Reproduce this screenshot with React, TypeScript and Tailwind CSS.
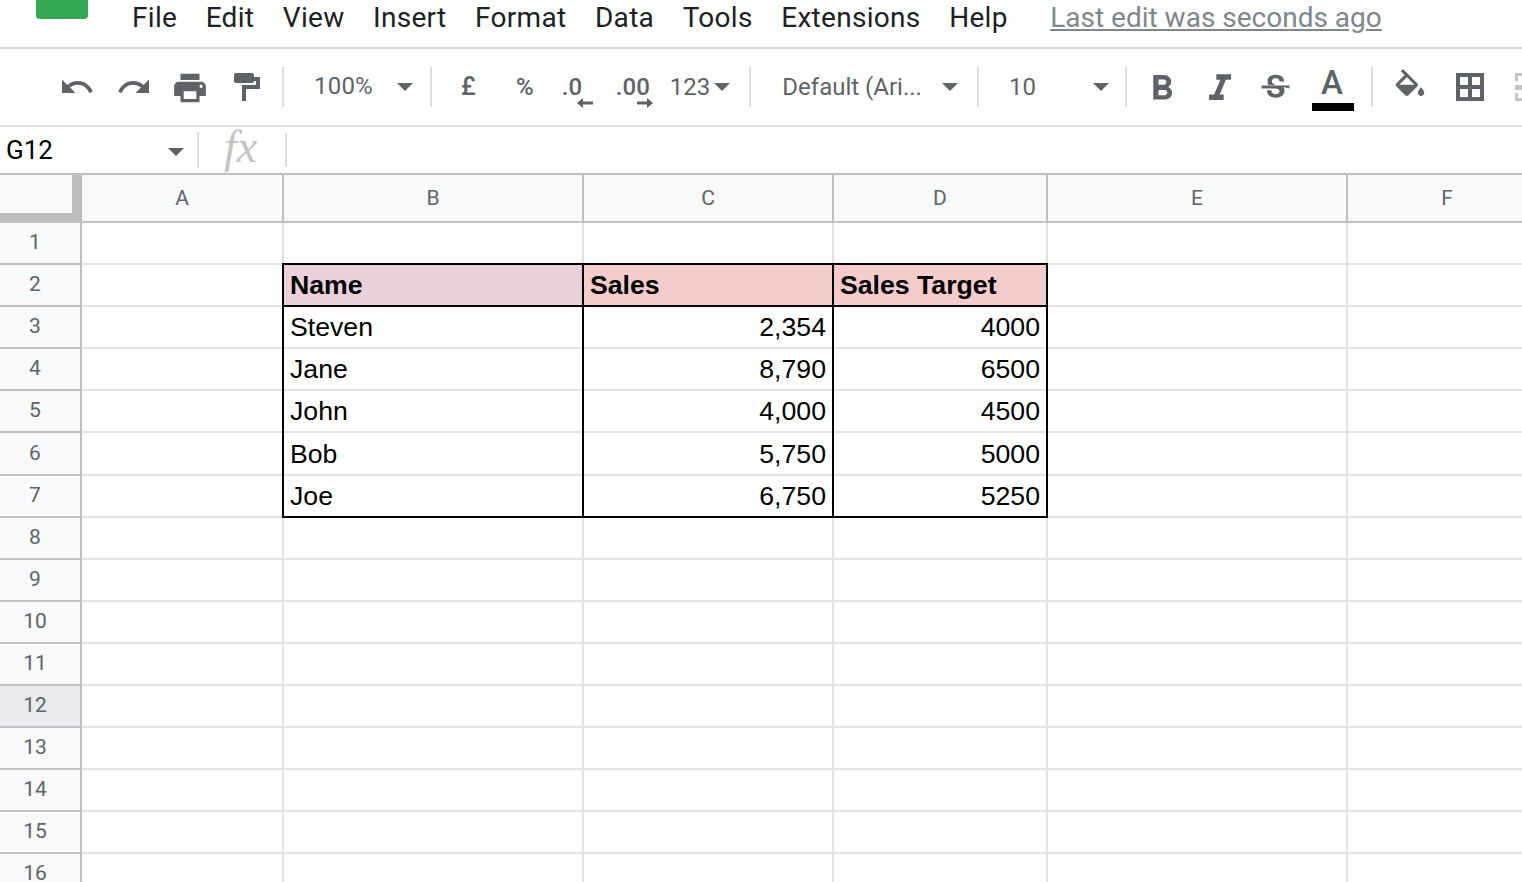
import React from 'react';

const menus = ['File', 'Edit', 'View', 'Insert', 'Format', 'Data', 'Tools', 'Extensions', 'Help'];
const columns = [
  { label: 'A', width: 'w-[202px]' },
  { label: 'B', width: 'w-[300px]' },
  { label: 'C', width: 'w-[250px]' },
  { label: 'D', width: 'w-[214px]' },
  { label: 'E', width: 'w-[300px]' },
  { label: 'F', width: 'w-[200px]' },
];
const rowNumbers = Array.from({ length: 16 }, (_, i) => i + 1);
const table: Record<number, string[]> = {
  2: ['Name', 'Sales', 'Sales Target'],
  3: ['Steven', '2,354', '4000'],
  4: ['Jane', '8,790', '6500'],
  5: ['John', '4,000', '4500'],
  6: ['Bob', '5,750', '5000'],
  7: ['Joe', '6,750', '5250'],
};

// small filled triangle used by every dropdown in the toolbar
const Caret = ({ className = '' }: { className?: string }) => (
  <svg width="16" height="8" viewBox="0 0 16 8" className={`shrink-0 ${className}`}>
    <path d="M0 0h16L8 8z" fill="#5f6368" />
  </svg>
);

const Sep = ({ className = 'h-10' }: { className?: string }) => <div className={`w-0.5 shrink-0 bg-[#dadce0] ${className}`} />;

const Icon = ({ d, size = 36, className = '' }: { d: string; size?: number; className?: string }) => (
  <svg width={size} height={size} viewBox="0 0 24 24" className={`shrink-0 ${className}`}>
    <path d={d} fill="#5f6368" />
  </svg>
);

const Toolbar = () => (
  <div className="flex h-[78px] items-center border-b-2 border-[#dadce0] pl-[59px] text-[24px] text-[#5f6368]">
    <Icon d="M12.5 8c-2.65 0-5.05.99-6.9 2.6L2 7v9h9l-3.62-3.62c1.39-1.16 3.16-1.88 5.12-1.88 3.54 0 6.55 2.31 7.6 5.5l2.37-.78C21.08 11.03 17.15 8 12.5 8z" />
    <Icon className="ml-[21px]" d="M18.4 10.6C16.55 8.99 14.15 8 11.5 8c-4.65 0-8.58 3.03-9.97 7.22L3.9 16c1.05-3.19 4.05-5.5 7.6-5.5 1.95 0 3.73.72 5.12 1.88L13 16h9V7l-3.6 3.6z" />
    <Icon className="mt-[2px] ml-[19px]" size={38} d="M19 8H5c-1.66 0-3 1.34-3 3v6h4v4h12v-4h4v-6c0-1.66-1.34-3-3-3zm-3 11H8v-5h8v5zm3-7c-.55 0-1-.45-1-1s.45-1 1-1 1 .45 1 1-.45 1-1 1zm-1-9H6v4h12V3z" />
    <svg width="26" height="28" viewBox="0 0 26 28" className="ml-[25px] shrink-0">
      <rect width="20" height="10" rx="2" fill="#5f6368" />
      <path d="M20 4h6v12H12v12H8V12h14V8h-2z" fill="#5f6368" />
    </svg>
    <Sep className="ml-[22px] h-10" />
    <span className="-mt-[2px] ml-[30px] w-[60px] tracking-[0.2px]">100%</span>
    <Caret className="ml-[23px]" />
    <Sep className="ml-[17px] h-10" />
    <span className="ml-[29px] w-[16px] text-[25px] font-medium">£</span>
    <span className="ml-[39px] w-[20px] font-medium">%</span>
    <div className="relative ml-[26px] h-[36px] w-[34px] shrink-0">
      <span className="leading-[36px] font-medium">.0</span>
      <svg width="16" height="10" viewBox="0 0 16 10" className="absolute top-[29px] left-[15px]">
        <path d="M6 0v3.500h10v3H6V10L0 5z" fill="#5f6368" />
      </svg>
    </div>
    <div className="relative ml-[20px] h-[36px] w-[36px] shrink-0">
      <span className="leading-[36px] font-medium">.00</span>
      <svg width="16" height="10" viewBox="0 0 16 10" className="absolute top-[29px] left-[21px]">
        <path d="M10 0v3.500H0v3h10V10l6-5z" fill="#5f6368" />
      </svg>
    </div>
    <span className="ml-[18px]">123</span>
    <Caret className="ml-[4px]" />
    <Sep className="ml-[19px] h-10" />
    <span className="ml-[31px] w-[140px] whitespace-nowrap">Default (Ari...</span>
    <Caret className="ml-[20px]" />
    <Sep className="ml-[19px] h-10" />
    <span className="ml-[30px] w-[56px]">10</span>
    <Caret className="ml-[28px]" />
    <Sep className="ml-[16px] h-10" />
    <Icon className="mt-[3px] ml-[14px]" size={42} d="M15.600 10.790c.97-.67 1.650-1.770 1.650-2.790 0-2.260-1.750-4-4-4H7v14h7.040c2.090 0 3.710-1.700 3.710-3.790 0-1.520-.86-2.820-2.150-3.420zM10 6.500h3c.83 0 1.500.67 1.500 1.500s-.67 1.500-1.500 1.500h-3v-3zm3.500 9H10v-3h3.500c.83 0 1.500.67 1.500 1.500s-.67 1.500-1.500 1.500z" />
    <Icon className="mt-[3px] ml-[15px]" size={44} d="M10 4v3h2.210l-3.420 8H6v3h8v-3h-2.210l3.420-8H18V4z" />
    <Icon className="mt-[3px] ml-[15px]" size={37} d="M6.850 7.080C6.850 4.370 9.450 3 12.240 3c1.640 0 3 .49 3.900 1.280.77.65 1.460 1.730 1.460 3.240h-3.010c0-.31-.05-.59-.15-.85-.29-.86-1.200-1.280-2.350-1.280-2.040 0-2.400 1.370-2.400 2.150 0 .52.26.95.8 1.310.42.27.87.52 1.960.9H7.390c-.36-.59-.54-1.300-.54-2.170zM21 12v-2H3v2h9.620c1.150.45 1.960.75 1.960 1.970 0 1-.81 1.670-2.280 1.670-1.540 0-2.930-.54-2.930-2.520H6.400c0 .55.08 1.130.24 1.580.81 2.290 3.010 3.220 5.670 3.220 2.710 0 5.500-1.400 5.500-4.440 0-1.030-.2-1.800-.6-2.480z" />
    <div className="relative ml-[18px] h-[46px] w-[42px] shrink-0">
      <span className="absolute top-[-6px] left-[9px] text-[33px] font-medium">A</span>
      <div className="absolute top-[39px] left-0 h-2 w-[42px] bg-black" />
    </div>
    <Sep className="ml-[17px] h-10" />
    <Icon className="mt-[2px] ml-[18px]" size={38} d="M16.560 8.940L7.620 0 6.210 1.410l2.380 2.380-5.150 5.150c-.59.59-.59 1.540 0 2.120l5.500 5.500c.29.29.68.44 1.060.44s.77-.15 1.060-.44l5.500-5.500c.59-.58.59-1.530 0-2.120zM5.210 10L10 5.210 14.790 10H5.210zM19 11.500s-2 2.170-2 3.500c0 1.100.9 2 2 2s2-.9 2-2c0-1.330-2-3.500-2-3.500z" />
    <svg width="28" height="28" viewBox="0 0 28 28" className="ml-[27px] shrink-0">
      <path fillRule="evenodd" d="M0 0h28v28H0zM4 4v8h8V4zM16 4v8h8V4zM4 16v8h8v-8zM16 16v8h8v-8z" fill="#5f6368" />
    </svg>
    {/* merge cells icon, disabled and cut off by the window edge */}
    <svg width="7" height="28" viewBox="0 0 7 28" className="ml-[31px] shrink-0">
      <path d="M0 0h7v3H3v5H0zM0 12h7v5H0zM0 20h3v5h4v3H0z" fill="#c4c4c4" />
    </svg>
  </div>
);

export default function App() {
  return (
    <div className="h-[882px] w-[1522px] overflow-hidden bg-white font-['Roboto',sans-serif]">
      <div className="relative flex h-[49px] items-center border-b-2 border-[#dadce0] pb-[11px] pl-[132px] text-[28px] text-[#202124]">
        <div className="absolute top-0 left-[36px] h-[19px] w-[52px] rounded-b-[4px] bg-[#34a853]" />
        {menus.map((m) => (
          <span key={m} className="mr-[28.5px] tracking-[0.3px]">{m}</span>
        ))}
        <span className="ml-[14px] text-[#80868b] underline">Last edit was seconds ago</span>
      </div>
      <Toolbar />
      <div className="flex h-[48px] items-center border-b-2 border-[#c0c0c0]">
        <span className="ml-[6px] w-[152px] text-[26px] text-black">G12</span>
        <Caret className="mt-1 ml-[10px]" />
        <Sep className="ml-[13px] h-[36px]" />
        <span className="-mt-[6px] ml-[25px] w-[38px] font-['Liberation_Serif',serif] text-[46px] leading-[44px] text-[#c4c4c4] italic">fx</span>
        <Sep className="ml-[23px] h-[34px]" />
      </div>
      <div className="flex h-[48px] border-b-2 border-[#c0c0c0] bg-[#f8f9fa] text-[21px] text-[#5f6368]">
        <div className="h-full w-[82px] shrink-0 border-r-[10px] border-b-[8px] border-[#bdbdbd]" />
        {columns.map((c) => (
          <div key={c.label} className={`${c.width} flex shrink-0 items-center justify-center border-r-2 border-[#c0c0c0] pt-[1px]`}>{c.label}</div>
        ))}
      </div>
      {rowNumbers.map((n) => {
        const cells = table[n];
        return (
          <div key={n} className={`flex ${n === 6 ? 'h-[43px]' : 'h-[42px]'}`}>
            <div className={`flex w-[82px] shrink-0 items-center justify-center border-r-2 border-b-2 border-[#c0c0c0] pr-[10px] text-[21px] text-[#5f6368] ${n === 12 ? 'bg-[#e8eaed]' : 'bg-[#f8f9fa]'}`}>{n}</div>
            {columns.map((c, i) => {
              const value = cells && i >= 1 && i <= 3 ? cells[i - 1] : null;
              if (value === null) {
                // column A carries the left edge of the table as its right border
                const leftOfTable = i === 0 && n >= 2 && n <= 7;
                return (
                  <div
                    key={c.label}
                    className={`${c.width} shrink-0 border-r-2 ${leftOfTable ? 'border-r-black shadow-[inset_0_-2px_0_#e2e2e2]' : 'border-b-2 border-[#e2e2e2]'} ${n === 2 && leftOfTable ? '-mt-[2px] h-[44px]' : ''}`}
                  />
                );
              }
              const header = n === 2;
              const last = n === 7;
              const headerBg = i === 1 ? 'bg-[#ead1dc]' : 'bg-[#f4cccc]';
              return (
                <div
                  key={c.label}
                  className={`${c.width} flex shrink-0 items-center border-r-2 border-r-black px-[6px] font-['Liberation_Sans',sans-serif] text-[26.67px] text-black ${header ? `-mt-[2px] h-[44px] border-y-2 border-y-black ${headerBg} font-bold` : ''} ${last ? 'border-b-2 border-b-black' : ''} ${!header && !last ? 'pb-[2px] shadow-[inset_0_-2px_0_#e2e2e2]' : ''} ${!header && i > 1 ? 'justify-end' : ''}`}
                >
                  {value}
                </div>
              );
            })}
          </div>
        );
      })}
    </div>
  );
}
